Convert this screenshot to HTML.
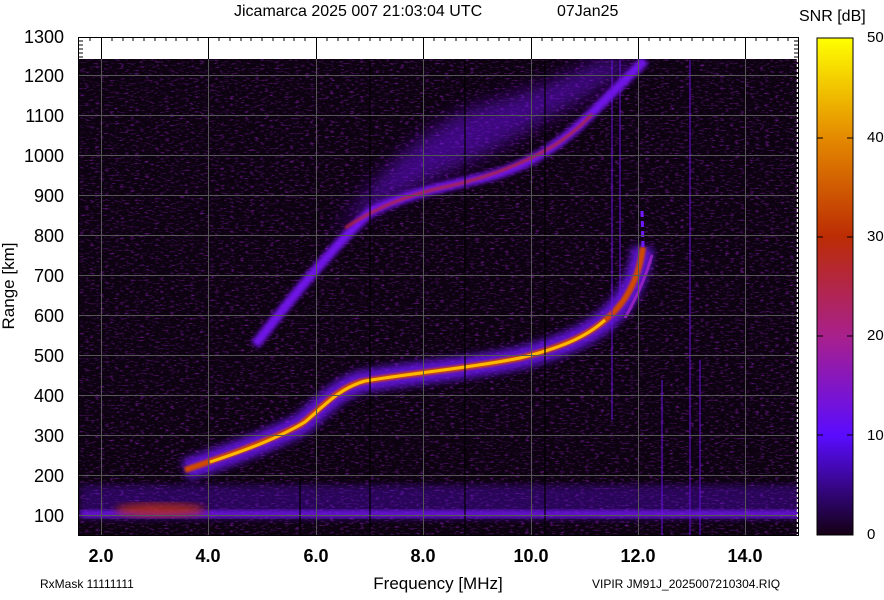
<!DOCTYPE html>
<html><head><meta charset="utf-8"><style>
html,body{margin:0;padding:0;background:#fff;}
body{width:884px;height:595px;overflow:hidden;position:relative;font-family:"Liberation Sans",Arial,sans-serif;}
</style></head><body>
<svg width="884" height="595" viewBox="0 0 884 595" xmlns="http://www.w3.org/2000/svg" font-family="Liberation Sans, Arial, sans-serif">
<defs>
<filter id="noise" x="0" y="0" width="100%" height="100%">
<feTurbulence type="fractalNoise" baseFrequency="0.2 0.6" numOctaves="2" seed="3" result="t"/>
<feColorMatrix type="matrix" values="0 0 0 0 0.35  0 0 0 0 0.02  0 0 0 0 0.6  0 0 0 3.2 -1.75" />
</filter>
<filter id="b1"><feGaussianBlur stdDeviation="1"/></filter>
<filter id="b2"><feGaussianBlur stdDeviation="2"/></filter>
<filter id="b4"><feGaussianBlur stdDeviation="4"/></filter>
<filter id="b8"><feGaussianBlur stdDeviation="9"/></filter>
<linearGradient id="cb" x1="0" y1="1" x2="0" y2="0">
<stop offset="0" stop-color="#140014"/>
<stop offset="0.2" stop-color="#5a0cff"/>
<stop offset="0.4" stop-color="#a8208c"/>
<stop offset="0.6" stop-color="#bc2c04"/>
<stop offset="0.8" stop-color="#e48a00"/>
<stop offset="1" stop-color="#ffff00"/>
</linearGradient>
<clipPath id="pc"><rect x="79" y="59" width="719" height="476"/></clipPath>
</defs>
<rect x="78" y="37" width="721" height="498" fill="#fff"/>
<g clip-path="url(#pc)">
<rect x="79" y="59" width="719" height="476" fill="#0c0210"/>
<rect x="79" y="59" width="719" height="476" filter="url(#noise)" opacity="0.6"/>
<!-- upper haze -->
<path d="M330,240 C370,205 410,190 450,170 C500,150 540,120 580,100 L640,60 L600,60 C560,80 520,95 480,105 C440,120 400,150 360,200 Z" fill="#7010f0" opacity="0.5" filter="url(#b8)"/>
<path d="M255,345 C290,300 330,250 370,212 C410,192 450,186 490,176 C530,165 560,145 590,115 C610,95 630,75 645,60" stroke="#7a18ff" stroke-width="10" fill="none" opacity="0.9" filter="url(#b2)"/>
<path d="M345,228 C380,205 410,195 440,188 C480,180 520,166 555,145 C570,135 582,125 592,114" stroke="#b02838" stroke-width="3" fill="none" opacity="0.9" filter="url(#b1)"/>
<!-- lower trace -->
<path d="M185,470 C220,458 260,445 300,425 C320,410 335,390 360,382 C400,374 460,370 520,358 C570,345 600,330 620,305 C632,290 640,270 643,247" stroke="#7018ff" stroke-width="22" fill="none" opacity="0.8" filter="url(#b4)"/>
<path d="M185,470 C220,458 260,445 300,425 C320,410 335,390 360,382 C400,374 460,370 520,358 C570,345 600,330 620,305 C632,290 640,270 643,247" stroke="#d04800" stroke-width="6" fill="none" filter="url(#b1)"/>
<path d="M210,462 C250,449 280,437 305,422 C325,405 340,388 365,381 C420,372 470,368 520,358 C560,348 585,338 605,320" stroke="#ffc000" stroke-width="3" fill="none" opacity="0.95"/>
<path d="M625,318 C635,300 645,280 652,255" stroke="#9020c0" stroke-width="3" fill="none"/>
<path d="M643,247 L642,210" stroke="#7018ff" stroke-width="3" stroke-dasharray="6,4" fill="none"/>
<!-- 100 km band -->
<rect x="80" y="485" width="720" height="35" fill="#6010e0" opacity="0.35" filter="url(#b4)"/>
<rect x="80" y="510" width="720" height="8" fill="#7a18ff" opacity="0.7" filter="url(#b2)"/>
<ellipse cx="160" cy="510" rx="45" ry="7" fill="#c03010" opacity="0.75" filter="url(#b4)"/>
<g stroke="#6a10e0" stroke-width="2" opacity="0.5">
<line x1="612" y1="60" x2="612" y2="420"/><line x1="620" y1="60" x2="620" y2="300"/>
<line x1="690" y1="60" x2="690" y2="535"/><line x1="662" y1="380" x2="662" y2="535"/>
<line x1="700" y1="360" x2="700" y2="535"/>
</g>
<g stroke="#000" stroke-width="2" opacity="0.6">
<line x1="370" y1="60" x2="370" y2="535"/><line x1="465" y1="60" x2="465" y2="535"/><line x1="545" y1="60" x2="545" y2="535"/><line x1="300" y1="480" x2="300" y2="535"/>
</g>
</g>
<g stroke="#555" stroke-width="1">
<line x1="101.5" y1="37" x2="101.5" y2="535"/><line x1="208.5" y1="37" x2="208.5" y2="535"/><line x1="316.5" y1="37" x2="316.5" y2="535"/><line x1="423.5" y1="37" x2="423.5" y2="535"/><line x1="531.5" y1="37" x2="531.5" y2="535"/><line x1="638.5" y1="37" x2="638.5" y2="535"/><line x1="745.5" y1="37" x2="745.5" y2="535"/>
<line x1="78" y1="75.5" x2="799" y2="75.5"/><line x1="78" y1="115.5" x2="799" y2="115.5"/><line x1="78" y1="155.5" x2="799" y2="155.5"/><line x1="78" y1="195.5" x2="799" y2="195.5"/><line x1="78" y1="235.5" x2="799" y2="235.5"/><line x1="78" y1="275.5" x2="799" y2="275.5"/><line x1="78" y1="315.5" x2="799" y2="315.5"/><line x1="78" y1="355.5" x2="799" y2="355.5"/><line x1="78" y1="395.5" x2="799" y2="395.5"/><line x1="78" y1="435.5" x2="799" y2="435.5"/><line x1="78" y1="475.5" x2="799" y2="475.5"/><line x1="78" y1="515.5" x2="799" y2="515.5"/>
</g>
<g stroke="#000" stroke-width="1">
<line x1="101.5" y1="37" x2="101.5" y2="59"/><line x1="208.5" y1="37" x2="208.5" y2="59"/><line x1="316.5" y1="37" x2="316.5" y2="59"/><line x1="423.5" y1="37" x2="423.5" y2="59"/><line x1="531.5" y1="37" x2="531.5" y2="59"/><line x1="638.5" y1="37" x2="638.5" y2="59"/><line x1="745.5" y1="37" x2="745.5" y2="59"/>
</g>
<path d="M112,37v4M123,37v4M133,37v4M144,37v4M155,37v4M166,37v4M176,37v4M187,37v4M198,37v4M219,37v4M230,37v4M241,37v4M251,37v4M262,37v4M273,37v4M284,37v4M294,37v4M305,37v4M327,37v4M338,37v4M348,37v4M359,37v4M370,37v4M380,37v4M391,37v4M402,37v4M413,37v4M434,37v4M445,37v4M456,37v4M466,37v4M477,37v4M488,37v4M499,37v4M509,37v4M520,37v4M542,37v4M552,37v4M563,37v4M574,37v4M585,37v4M595,37v4M606,37v4M617,37v4M628,37v4M649,37v4M660,37v4M670,37v4M681,37v4M692,37v4M703,37v4M713,37v4M724,37v4M735,37v4M756,37v4M767,37v4M778,37v4M788,37v4M90,37v4M79,41h4M79,45h4M79,49h4M79,53h4M79,57h4M794,41h4M794,45h4M794,49h4M794,53h4M794,57h4" stroke="#000" stroke-width="1"/>
<line x1="797.5" y1="59" x2="797.5" y2="535" stroke="#fff" stroke-width="1.5" stroke-dasharray="3,2"/>
<rect x="78.5" y="37.5" width="720" height="498" fill="none" stroke="#000" stroke-width="1"/>
<rect x="817" y="38" width="36" height="497" fill="url(#cb)" stroke="#000" stroke-width="1"/>
<g stroke="#000" stroke-width="1"><path d="M817,138h6M847,138h6M817,237h6M847,237h6M817,336h6M847,336h6M817,435h6M847,435h6"/></g>
<g font-size="15" fill="#000">
<text x="867" y="42">50</text><text x="867" y="142">40</text><text x="867" y="241">30</text><text x="867" y="340">20</text><text x="867" y="440">10</text><text x="867" y="539">0</text>
</g>
<text x="234" y="16" font-size="16" fill="#000">Jicamarca 2025 007 21:03:04 UTC</text>
<text x="557" y="16" font-size="16" fill="#000">07Jan25</text>
<text x="799" y="21" font-size="16" fill="#000">SNR [dB]</text>
<g font-size="18" fill="#000" text-anchor="end">
<text x="64" y="43">1300</text><text x="64" y="82">1200</text><text x="64" y="122">1100</text><text x="64" y="162">1000</text><text x="64" y="202">900</text><text x="64" y="242">800</text><text x="64" y="282">700</text><text x="64" y="322">600</text><text x="64" y="362">500</text><text x="64" y="402">400</text><text x="64" y="442">300</text><text x="64" y="482">200</text><text x="64" y="522">100</text>
</g>
<text transform="translate(14,286) rotate(-90)" font-size="17" text-anchor="middle" fill="#000">Range [km]</text>
<g font-size="18" font-weight="bold" fill="#000" text-anchor="middle">
<text x="101" y="562">2.0</text><text x="208" y="562">4.0</text><text x="316" y="562">6.0</text><text x="423" y="562">8.0</text><text x="531" y="562">10.0</text><text x="638" y="562">12.0</text><text x="745" y="562">14.0</text>
</g>
<text x="438" y="589" font-size="17" text-anchor="middle" fill="#000">Frequency [MHz]</text>
<text x="40" y="588" font-size="12" fill="#000">RxMask 11111111</text>
<text x="592" y="588" font-size="12" fill="#000">VIPIR  JM91J_2025007210304.RIQ</text>
</svg>
</body></html>
